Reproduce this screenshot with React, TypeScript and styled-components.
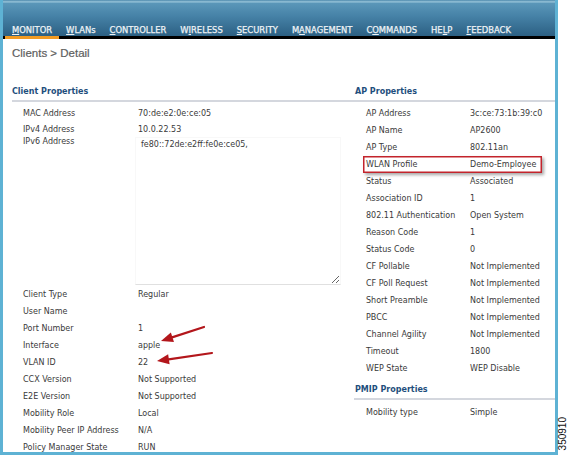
import React from 'react';
import styled, { createGlobalStyle } from 'styled-components';

const Global = createGlobalStyle`
  html, body { margin: 0; padding: 0; background: #ffffff; }
  body { width: 568px; height: 456px; overflow: hidden; }
  #root { width: 568px; height: 456px; }
`;

const Page = styled.div`
  display: flex;
  width: 568px;
  height: 456px;
`;

const Frame = styled.div`
  position: relative;
  flex: none;
  box-sizing: border-box;
  width: 558px;
  height: 455px;
  border: 3px solid #5eb2d4;
  border-top: none;
  overflow: hidden;
  background: #fff;
  font-family: "DejaVu Sans", Verdana, sans-serif;
`;

const SideStrip = styled.div`
  flex: 1;
  display: flex;
  align-items: flex-end;
  justify-content: center;
  padding-bottom: 6px;
  box-sizing: border-box;
`;

const FigNum = styled.span`
  writing-mode: vertical-rl;
  transform: rotate(180deg);
  font-family: "Liberation Sans", Arial, sans-serif;
  font-size: 10px;
  line-height: 10px;
  color: #111;
`;

const Header = styled.nav`
  height: 36px;
  display: flex;
  align-items: flex-end;
  padding-left: 2px;
  background: linear-gradient(
    to bottom,
    #4c88ab 0px,
    #9dc8dc 2px,
    #5b97b9 3px,
    #4682a7 16px,
    #2c6083 36px
  );
  border-bottom: 3px solid #000;
`;

const NavItem = styled.div<{ $active?: boolean }>`
  padding: 0 7px 1px;
  margin-bottom: -3px;
  border-bottom: 3px solid ${(p) => (p.$active ? '#f29b22' : 'transparent')};
  color: #eef3f6;
  font-size: 8.4px;
  line-height: 10px;
  white-space: nowrap;
  -webkit-text-stroke: 0.25px #eef3f6;
  u {
    text-decoration: underline;
    text-underline-offset: 1px;
  }
`;

const Title = styled.h1`
  margin: 0;
  padding: 7px 0 0 9px;
  font-family: "Liberation Sans", Arial, sans-serif;
  font-weight: normal;
  font-size: 11.5px;
  line-height: 14px;
  color: #5e5e5e;
  -webkit-text-stroke: 0.2px #5e5e5e;
`;

const Columns = styled.div`
  display: flex;
  margin-top: 26px;
  padding-left: 9px;
`;

const LeftCol = styled.section`
  width: 342px;
  display: flex;
  flex-direction: column;
`;

const RightCol = styled.section`
  flex: 1;
  display: flex;
  flex-direction: column;
`;

const SectionHeading = styled.h2<{ $indent?: number; $gap?: number }>`
  margin: ${(p) => p.$gap ?? 0}px 0 0;
  padding: 0 0 2px ${(p) => p.$indent ?? 0}px;
  font-weight: bold;
  font-size: 8px;
  line-height: 12px;
  color: #1f4f7d;
  border-bottom: 2px solid #d4d7de;
`;

const Rows = styled.div<{ $pad?: number }>`
  display: flex;
  flex-direction: column;
  padding-top: ${(p) => p.$pad ?? 3}px;
`;

const Row = styled.div<{ $h?: number; $top?: boolean; $right?: boolean; $mark?: boolean }>`
  display: flex;
  flex: none;
  align-items: ${(p) => (p.$top ? 'flex-start' : 'center')};
  height: ${(p) => (p.$h ? `${p.$h}px` : '17px')};
  box-sizing: border-box;
  padding-left: ${(p) => (p.$right ? 3 : 11)}px;
  margin-left: ${(p) => (p.$right ? 9 : 0)}px;
  width: ${(p) => (p.$right ? '179px' : 'auto')};
  font-size: 8px;
  line-height: 10px;
  color: #3a3a3a;
  white-space: nowrap;
  box-shadow: ${(p) =>
    p.$mark ? 'inset 0 0 0 1.5px #c3242c, 2px 2px 3px rgba(0,0,0,0.35)' : 'none'};
`;

const Label = styled.span<{ $w: number }>`
  width: ${(p) => p.$w}px;
  flex: none;
`;

const Value = styled.span`
  flex: none;
`;

const AddrBox = styled.textarea`
  margin: 0 0 0 -3px;
  width: 206px;
  height: 148px;
  box-sizing: border-box;
  padding: 2px 5px;
  border: 1px solid #f8f8f8;
  border-bottom-color: #e0e0e0;
  font-family: "DejaVu Sans", Verdana, sans-serif;
  font-size: 8px;
  line-height: 10px;
  color: #3a3a3a;
  background: #fff;
  outline: none;
`;

const Overlay = styled.svg`
  position: absolute;
  left: -3px;
  top: 0;
  width: 558px;
  height: 455px;
  pointer-events: none;
`;

const nav: { pre: string; key: string; post: string; active?: boolean }[] = [
  { pre: '', key: 'M', post: 'ONITOR', active: true },
  { pre: '', key: 'W', post: 'LANs' },
  { pre: '', key: 'C', post: 'ONTROLLER' },
  { pre: 'W', key: 'I', post: 'RELESS' },
  { pre: '', key: 'S', post: 'ECURITY' },
  { pre: 'M', key: 'A', post: 'NAGEMENT' },
  { pre: 'C', key: 'O', post: 'MMANDS' },
  { pre: 'HE', key: 'L', post: 'P' },
  { pre: '', key: 'F', post: 'EEDBACK' },
];

const clientBottom: [string, string][] = [
  ['Client Type', 'Regular'],
  ['User Name', ''],
  ['Port Number', '1'],
  ['Interface', 'apple'],
  ['VLAN ID', '22'],
  ['CCX Version', 'Not Supported'],
  ['E2E Version', 'Not Supported'],
  ['Mobility Role', 'Local'],
  ['Mobility Peer IP Address', 'N/A'],
  ['Policy Manager State', 'RUN'],
];

const apProps: [string, string][] = [
  ['AP Address', '3c:ce:73:1b:39:c0'],
  ['AP Name', 'AP2600'],
  ['AP Type', '802.11an'],
  ['WLAN Profile', 'Demo-Employee'],
  ['Status', 'Associated'],
  ['Association ID', '1'],
  ['802.11 Authentication', 'Open System'],
  ['Reason Code', '1'],
  ['Status Code', '0'],
  ['CF Pollable', 'Not Implemented'],
  ['CF Poll Request', 'Not Implemented'],
  ['Short Preamble', 'Not Implemented'],
  ['PBCC', 'Not Implemented'],
  ['Channel Agility', 'Not Implemented'],
  ['Timeout', '1800'],
  ['WEP State', 'WEP Disable'],
];

const Arrow: React.FC<{ x1: number; y1: number; x2: number; y2: number }> = ({ x1, y1, x2, y2 }) => {
  const dx = x2 - x1;
  const dy = y2 - y1;
  const len = Math.hypot(dx, dy);
  const ux = dx / len;
  const uy = dy / len;
  const hl = 12;
  const hw = 5;
  const bx = x2 - ux * hl;
  const by = y2 - uy * hl;
  const nx = -uy * hw;
  const ny = ux * hw;
  return (
    <g>
      <line x1={x1} y1={y1} x2={bx + ux * 2} y2={by + uy * 2} stroke="#b3161b" strokeWidth={2.2} strokeLinecap="round" />
      <polygon
        points={`${x2},${y2} ${bx + nx},${by + ny} ${bx - nx},${by - ny}`}
        fill="#b3161b"
      />
    </g>
  );
};

export default function App() {
  return (
    <Page>
      <Global />
      <Frame>
        <Header>
          {nav.map((n) => (
            <NavItem key={n.pre + n.key + n.post} $active={n.active}>
              {n.pre}
              <u>{n.key}</u>
              {n.post}
            </NavItem>
          ))}
        </Header>
        <Title>Clients &gt; Detail</Title>
        <Columns>
          <LeftCol>
            <SectionHeading>Client Properties</SectionHeading>
            <Rows>
              <Row>
                <Label $w={115}>MAC Address</Label>
                <Value>70:de:e2:0e:ce:05</Value>
              </Row>
              <Row $h={15}>
                <Label $w={115}>IPv4 Address</Label>
                <Value>10.0.22.53</Value>
              </Row>
              <Row $h={148} $top>
                <Label $w={115}>IPv6 Address</Label>
                <AddrBox readOnly value="fe80::72de:e2ff:fe0e:ce05," />
              </Row>
            </Rows>
            <Rows $pad={1}>
              {clientBottom.map(([l, v]) => (
                <Row key={l}>
                  <Label $w={115}>{l}</Label>
                  <Value>{v}</Value>
                </Row>
              ))}
            </Rows>
          </LeftCol>
          <RightCol>
            <SectionHeading $indent={1}>AP Properties</SectionHeading>
            <Rows>
              {apProps.map(([l, v]) => (
                <Row key={l} $right $mark={l === 'WLAN Profile'}>
                  <Label $w={104}>{l}</Label>
                  <Value>{v}</Value>
                </Row>
              ))}
            </Rows>
            <SectionHeading $indent={1} $gap={7}>PMIP Properties</SectionHeading>
            <Rows $pad={4}>
              <Row $right>
                <Label $w={104}>Mobility type</Label>
                <Value>Simple</Value>
              </Row>
            </Rows>
          </RightCol>
        </Columns>
        <Overlay viewBox="0 0 558 455">
          <Arrow x1={204} y1={327} x2={161} y2={341} />
          <Arrow x1={212} y1={353} x2={157} y2={361} />
        </Overlay>
      </Frame>
      <SideStrip>
        <FigNum>350910</FigNum>
      </SideStrip>
    </Page>
  );
}
